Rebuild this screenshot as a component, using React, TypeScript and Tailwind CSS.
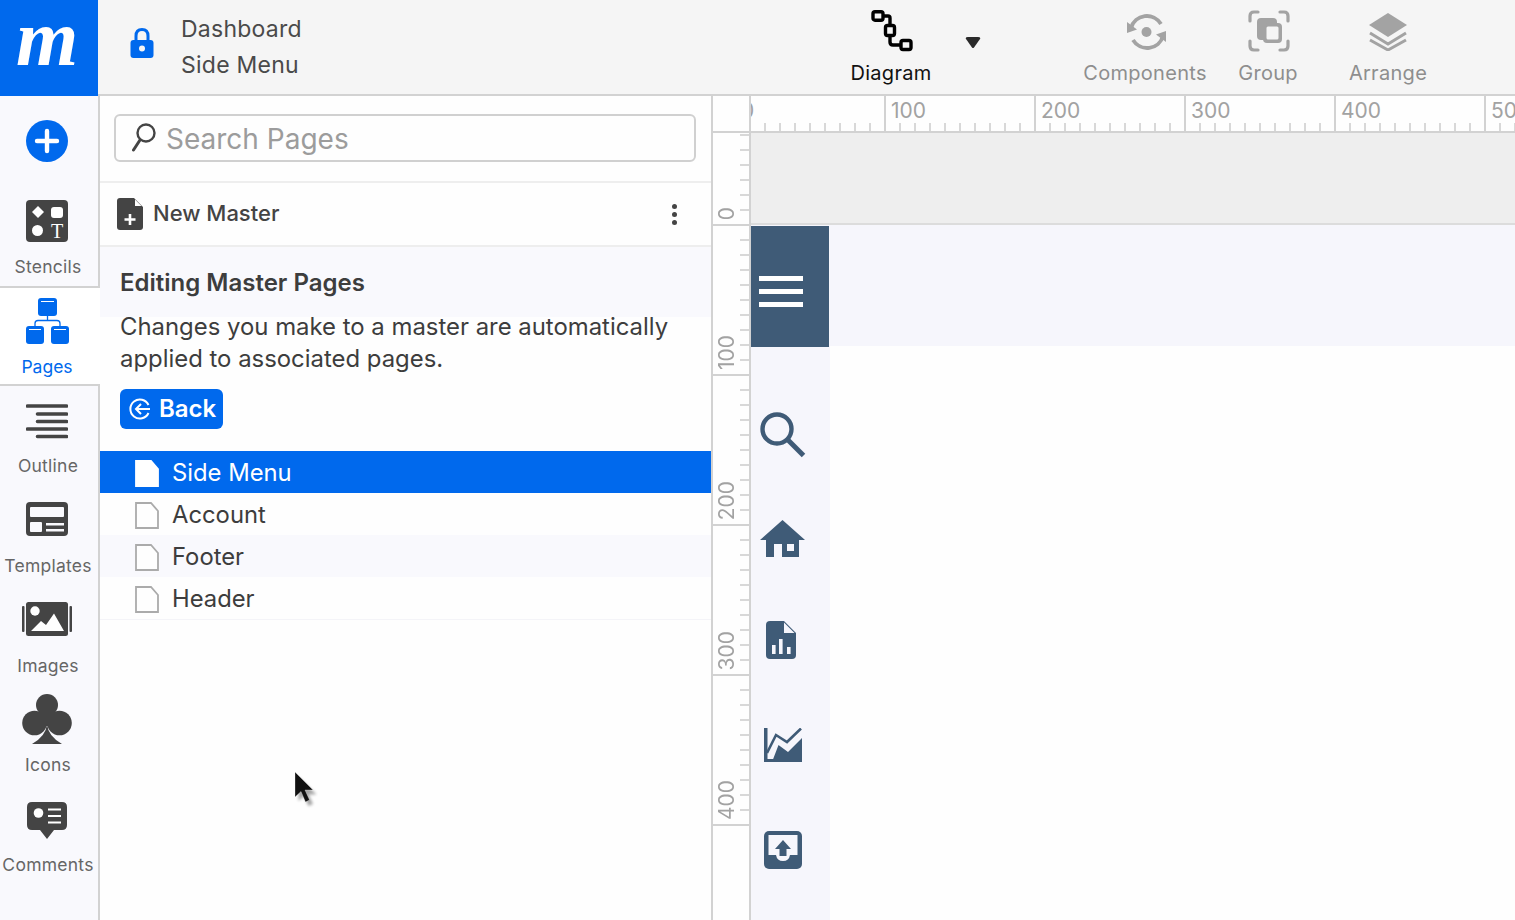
import React from "react";

const BLUE = "#0069ed";
const DARK = "#444444";
const NAVY = "#3f5b77";

function Ic({ w, h, children, className = "" }: { w: number; h: number; children: React.ReactNode; className?: string }) {
  return (
    <svg width={w} height={h} viewBox={`0 0 ${w} ${h}`} className={`block shrink-0 ${className}`}>
      {children}
    </svg>
  );
}

const Stencils = () => (
  <Ic w={42} h={42}>
    <rect width={42} height={42} rx={4} fill={DARK} />
    <path d="M12 6 L18 12 L12 18 L6 12 Z" fill="#fff" />
    <rect x={25} y={7} width={12} height={11} rx={3} fill="#fff" />
    <circle cx={11.5} cy={30.5} r={5.5} fill="#fff" />
    <text x={31} y={38} textAnchor="middle" fontFamily="Liberation Serif, serif" fontSize={20} fill="#fff">T</text>
  </Ic>
);
const Pages = () => (
  <Ic w={44} h={46}>
    <rect x={12} y={0} width={19} height={18} rx={3} fill={BLUE} />
    <rect x={0} y={28} width={18} height={18} rx={3} fill={BLUE} />
    <rect x={25} y={28} width={18} height={18} rx={3} fill={BLUE} />
    <path d="M15 3.5H28M3 31.5H15M28 31.5H40" stroke="#fff" strokeWidth={1.2} />
    <path d="M21.5 18V22M9 28V25.5Q9 22.5 12 22.5H31Q34 22.5 34 25.5V28" stroke={BLUE} strokeWidth={1.3} fill="none" />
  </Ic>
);
const Outline = () => (
  <Ic w={42} h={36}>
    <path d="M1.5 3H40.5M11.5 11H40.5M11.5 18.5H40.5M1.5 26H40.5M11.5 33.5H40.5" stroke={DARK} strokeWidth={3.6} strokeLinecap="round" />
  </Ic>
);
const Templates = () => (
  <Ic w={42} h={34}>
    <rect width={42} height={34} rx={4} fill={DARK} />
    <rect x={4} y={5} width={34} height={10} rx={1} fill="#f9f9fd" />
    <rect x={4} y={20} width={12} height={10} rx={1} fill="#f9f9fd" />
    <rect x={20} y={21} width={18} height={2.5} fill="#f9f9fd" />
    <rect x={20} y={27} width={18} height={2.5} fill="#f9f9fd" />
  </Ic>
);
const Images = () => (
  <Ic w={50} h={34}>
    <rect x={0} y={4} width={2.5} height={26} rx={1} fill={DARK} />
    <rect x={47.5} y={4} width={2.5} height={26} rx={1} fill={DARK} />
    <rect x={4} y={0} width={42} height={34} rx={2.5} fill={DARK} />
    <circle cx={13} cy={9} r={4.7} fill="#fff" />
    <path d="M9 29 L19 19 L24 23 L32 11.5 L42 29 Z" fill="#fff" />
  </Ic>
);
const Club = () => (
  <Ic w={50} h={50}>
    <circle cx={25} cy={11} r={11} fill={DARK} />
    <circle cx={12.5} cy={29} r={12.3} fill={DARK} />
    <circle cx={37.5} cy={29} r={12.3} fill={DARK} />
    <rect x={18} y={16} width={14} height={16} fill={DARK} />
    <path d="M25 30 Q24 42 10 50 H40 Q26 42 25 30 Z" fill={DARK} />
  </Ic>
);
const Comments = () => (
  <Ic w={40} h={38}>
    <path d="M5 0H35Q40 0 40 5V23Q40 28 35 28H27L20 37L13 28H5Q0 28 0 23V5Q0 0 5 0Z" fill={DARK} />
    <circle cx={11.5} cy={11} r={4.8} fill="#fff" />
    <path d="M21 7.5H34M21 14H34M21 20.5H34" stroke="#fff" strokeWidth={2} />
  </Ic>
);
const Plus = () => (
  <Ic w={42} h={42}>
    <circle cx={21} cy={21} r={21} fill={BLUE} />
    <path d="M21 11V31M11 21H31" stroke="#fff" strokeWidth={4.4} strokeLinecap="round" />
  </Ic>
);
const Lock = () => (
  <Ic w={24} h={32}>
    <path d="M6 15V9Q6 2.5 12 2.5T18 9V15" fill="none" stroke={BLUE} strokeWidth={3} />
    <rect x={0.5} y={13} width={23} height={18} rx={3} fill={BLUE} />
    <circle cx={12} cy={21.5} r={3} fill="#f5f5f5" />
  </Ic>
);
const DiagramIcon = () => (
  <Ic w={42} h={42}>
    <g fill="none" stroke="#000" strokeWidth={3.4}>
      <rect x={2} y={1.7} width={10} height={8.5} rx={2} />
      <rect x={14.5} y={15.5} width={9} height={10} rx={2} />
      <rect x={30} y={30.5} width={10} height={9} rx={2} />
      <path d="M12 6H17Q19 6 19 8V15.5M19 25.5V32Q19 35 22 35H30" />
    </g>
  </Ic>
);
const ComponentsIcon = () => (
  <Ic w={40} h={38}>
    <g fill="none" stroke="#a3a3a3" strokeWidth={3.8}>
      <path d="M4 15A16.5 16.5 0 0 1 34 11" />
      <path d="M36 23A16.5 16.5 0 0 1 6 27" />
    </g>
    <path d="M0 9L10 16.5L0 20Z" fill="#a3a3a3" />
    <path d="M39 29L29 21.5L39 18Z" fill="#a3a3a3" />
    <circle cx={19.5} cy={19} r={5} fill="#a3a3a3" />
  </Ic>
);
const GroupIcon = () => (
  <Ic w={42} h={42}>
    <g fill="none" stroke="#a3a3a3" strokeWidth={3.2} strokeLinecap="round">
      <path d="M10 2H6Q2 2 2 6V11M32 2H36Q40 2 40 6V11M10 40H6Q2 40 2 36V31M32 40H36Q40 40 40 36V31" />
    </g>
    <rect x={9} y={8} width={20} height={22} rx={4} fill="#a3a3a3" />
    <rect x={15} y={13} width={19} height={20} rx={4} fill="#a3a3a3" />
    <rect x={18.5} y={16.5} width={12} height={13} rx={1.5} fill="#f5f5f5" />
  </Ic>
);
const ArrangeIcon = () => (
  <Ic w={40} h={38}>
    <path d="M20 0L39 12L20 24L1 12Z" fill="#a3a3a3" />
    <path d="M2 20L20 31L38 20M2 27L20 37L38 27" fill="none" stroke="#a3a3a3" strokeWidth={3} />
  </Ic>
);
const SearchSmall = () => (
  <Ic w={24} h={30}>
    <circle cx={14} cy={10} r={8.5} fill="none" stroke={DARK} strokeWidth={2.4} />
    <path d="M8 17L1.5 27" stroke={DARK} strokeWidth={3} strokeLinecap="round" />
  </Ic>
);
const NewMasterIcon = () => (
  <Ic w={26} h={32}>
    <path d="M3 0H17L26 9V29Q26 32 23 32H3Q0 32 0 29V3Q0 0 3 0Z" fill={DARK} />
    <path d="M18 1.5L24.5 8H18Z" fill="#fff" />
    <path d="M13 16V27M7.5 21.5H18.5" stroke="#fff" strokeWidth={2.6} />
  </Ic>
);
const Doc = ({ on }: { on?: boolean }) => (
  <Ic w={24} h={27} className="mt-[2px]">
    <path d="M1 1H16L23 9V26H1Z" fill={on ? "#fff" : "#fefefe"} stroke={on ? "#fff" : "#ababab"} strokeWidth={1.8} />
  </Ic>
);
const BackIcon = () => (
  <Ic w={22} h={22}>
    <path d="M19.5 7A9.5 9.5 0 1 0 19.5 15" fill="none" stroke="#fff" strokeWidth={2} />
    <path d="M21 11H7M12 6L7 11L12 16" fill="none" stroke="#fff" strokeWidth={2} />
  </Ic>
);
const SearchNav = () => (
  <Ic w={46} h={46}>
    <circle cx={17} cy={17} r={14.5} fill="none" stroke={NAVY} strokeWidth={4.4} />
    <path d="M27.5 27.5L43.5 43.5" stroke={NAVY} strokeWidth={5} />
  </Ic>
);
const HomeNav = () => (
  <Ic w={45} h={37}>
    <path d="M22.5 0L45 20H39V37H6V20H0Z" fill={NAVY} />
    <rect x={14} y={24} width={8} height={13} fill="#f6f6fc" />
    <rect x={27} y={24} width={7} height={7} fill="#f6f6fc" />
  </Ic>
);
const ReportNav = () => (
  <Ic w={30} h={38}>
    <path d="M4 0H18L30 12V34Q30 38 26 38H4Q0 38 0 34V4Q0 0 4 0Z" fill={NAVY} />
    <path d="M18 1.5L28.5 12H18Z" fill="#f6f6fc" />
    <rect x={6} y={24} width={3.6} height={9} fill="#f6f6fc" />
    <rect x={13} y={18} width={3.6} height={15} fill="#f6f6fc" />
    <rect x={21} y={26} width={3.6} height={7} fill="#f6f6fc" />
  </Ic>
);
const ChartNav = () => (
  <Ic w={38} h={34}>
    <rect x={0} y={0} width={3.5} height={34} fill={NAVY} />
    <path d="M3 25L12 7L23 14L37 0.5" fill="none" stroke={NAVY} strokeWidth={2.6} />
    <path d="M8 34L14.5 17L24 24L38 10V34Z" fill={NAVY} />
    <rect x={0} y={31} width={10} height={3} fill={NAVY} />
  </Ic>
);
const UploadNav = () => (
  <Ic w={38} h={38}>
    <rect width={38} height={38} rx={5} fill={NAVY} />
    <path d="M4.5 4H33.5V24H26Q25 30 19 30T12 24H4.5Z" fill="#f6f6fc" />
    <path d="M19 9L27 18H22.5V25H15.5V18H11Z" fill={NAVY} />
  </Ic>
);
const Cursor = () => (
  <svg width={24} height={40} viewBox="0 0 24 40" className="block">
    <path d="M3 4V28L8.5 23L13 33L17.5 31L13 21.5H21Z" fill="#000" opacity={0.35} style={{ filter: "blur(1.5px)" }} transform="translate(1.5 2)" />
    <path d="M1 1V26L7 20.5L11.5 31L15.5 29L11 19H19Z" fill="#111" stroke="#fff" strokeWidth={0.3} />
  </svg>
);

function NavLabel({ children, className = "" }: { children: React.ReactNode; className?: string }) {
  return <div className={`text-[17.5px] tracking-[0.25px] ml-[2px] leading-[22px] text-[#666666] whitespace-nowrap ${className}`}>{children}</div>;
}

function HSeg({ label }: { label: string }) {
  return (
    <div className="w-[150px] h-full shrink-0 border-r-2 border-[#d2d2d2] flex flex-col justify-between box-border">
      <div className="h-[27px] pt-[3px] flex justify-end">
        <span className="w-[143px] text-[21px] leading-[24px] text-[#a2a2a2]">{label}</span>
      </div>
      <div className="flex h-[8px] justify-end">
        {[0, 1, 2, 3, 4, 5, 6, 7, 8].map((i) => (
          <div key={i} className="w-[15px] border-r-2 border-[#d8d8d8]" />
        ))}
        <div className="w-[13px]" />
      </div>
    </div>
  );
}

function VSeg({ label }: { label: string }) {
  return (
    <div className="h-[150px] shrink-0 border-b-2 border-[#d2d2d2] flex box-border">
      <div className="w-[27px] flex flex-col justify-end items-center pb-[4px] pl-[1px]">
        <span className="[writing-mode:vertical-rl] rotate-180 text-[21px] leading-[24px] text-[#a2a2a2]">{label}</span>
      </div>
      <div className="w-[9px] flex flex-col justify-end">
        {[0, 1, 2, 3, 4, 5, 6, 7, 8].map((i) => (
          <div key={i} className="h-[15px] border-t-2 border-[#d8d8d8]" />
        ))}
      </div>
    </div>
  );
}

function Tool({ icon, label, w, ml, dark, gap }: { icon: React.ReactNode; label: string; w: string; ml: string; dark?: boolean; gap: string }) {
  return (
    <div className={`flex flex-col items-center shrink-0 ${w} ${ml}`}>
      <div className={`h-[52px] flex flex-col justify-center ${gap}`}>{icon}</div>
      <div className={`mt-[8px] text-[20px] tracking-[0.3px] leading-[26px] whitespace-nowrap ${dark ? "text-[#111111]" : "text-[#8e8e8e]"}`}>{label}</div>
    </div>
  );
}

function Row({ label, on, alt }: { label: string; on?: boolean; alt?: boolean }) {
  return (
    <div className={`h-[42px] flex items-center pl-[35px] gap-[13px] ${on ? "bg-[#0069ed] text-white" : alt ? "bg-[#f9f9fd] text-[#3d3d3d]" : "bg-[#fefefe] text-[#3d3d3d]"}`}>
      <Doc on={on} />
      <span className="text-[23.8px] leading-[30px] pt-[2px]">{label}</span>
    </div>
  );
}

export default function App() {
  return (
    <div className="relative w-[1515px] h-[920px] overflow-hidden bg-[#fefefe] flex flex-col font-['Inter',sans-serif]">
      {/* top bar */}
      <div className="h-[96px] shrink-0 flex bg-[#f5f5f5] border-b-2 border-[#d2d2d2] box-border">
        <div className="w-[98px] h-[96px] shrink-0 bg-[#0069ed] flex items-center justify-center">
          <span className="font-['Liberation_Serif',serif] italic font-bold text-white text-[80px] leading-[76px] -mt-[20px] mr-[4px]">m</span>
        </div>
        <div className="ml-[32px] w-[24px] pt-[27px]"><Lock /></div>
        <div className="ml-[27px] w-[660px] shrink-0 pt-[11px] text-[23px] tracking-[0.25px] leading-[36px] text-[#4a4a4a]">
          <div>Dashboard</div>
          <div>Side Menu</div>
        </div>
        <div className="absolute left-[841px] top-0 flex">
          <Tool icon={<DiagramIcon />} label="Diagram" w="w-[100px]" ml="ml-0" dark gap="pt-[10px] ml-[2px]" />
        </div>
        <div className="absolute left-[965px] top-[37px]">
          <Ic w={16} h={11}><path d="M1 2Q0 0 3 0H13Q16 0 15 2L9 10.5Q8 11.5 7 10.5Z" fill="#2a2a2a" /></Ic>
        </div>
        <div className="absolute left-[1084px] top-0 flex">
          <Tool icon={<ComponentsIcon />} label="Components" w="w-[122px]" ml="ml-0" gap="pt-[12px] ml-[4px]" />
          <Tool icon={<GroupIcon />} label="Group" w="w-[80px]" ml="ml-[22px]" gap="pt-[10px] ml-[2px]" />
          <Tool icon={<ArrangeIcon />} label="Arrange" w="w-[100px]" ml="ml-[30px]" gap="pt-[12px]" />
        </div>
      </div>

      <div className="flex-1 flex min-h-0">
        {/* left nav */}
        <div className="w-[100px] shrink-0 bg-[#f9f9fd] border-r-2 border-[#d2d2d2] box-border flex flex-col relative">
          <div className="h-[192px] flex flex-col items-center pt-[24px] pr-[4px]">
            <Plus />
            <div className="mt-[38px]"><Stencils /></div>
            <NavLabel className="mt-[14px]">Stencils</NavLabel>
          </div>
          <div className="w-[100px] h-[100px] shrink-0 bg-white border-y-2 border-[#d2d2d2] flex flex-col items-center pt-[10px] pr-[4px] box-border -mt-[2px]">
            <Pages />
            <div className="text-[17.5px] leading-[22px] mt-[12px] mr-[2px] text-[#0069ed]">Pages</div>
          </div>
          <div className="flex flex-col items-center pr-[4px]">
            <div className="mt-[17px]"><Outline /></div>
            <NavLabel className="mt-[16px]">Outline</NavLabel>
            <div className="mt-[25px]"><Templates /></div>
            <NavLabel className="mt-[19px]">Templates</NavLabel>
            <div className="mt-[25px]"><Images /></div>
            <NavLabel className="mt-[19px]">Images</NavLabel>
            <div className="mt-[17px]"><Club /></div>
            <NavLabel className="mt-[10px]">Icons</NavLabel>
            <div className="mt-[26px]"><Comments /></div>
            <NavLabel className="mt-[14px]">Comments</NavLabel>
          </div>
        </div>

        {/* panel */}
        <div className="w-[611px] shrink-0 flex flex-col">
          <div className="h-[87px] border-b-2 border-[#eeeeee] box-border pt-[18px] pl-[14px] pr-[15px]">
            <div className="h-[48px] border-2 border-[#d0d0d0] rounded-[6px] flex items-center pl-[16px] gap-[10px] bg-[#fefefe]">
              <SearchSmall />
              <span className="text-[28px] leading-[34px] pt-[2px] text-[#9c9c9c]">Search Pages</span>
            </div>
          </div>
          <div className="h-[64px] border-b-2 border-[#eeeeee] box-border flex items-center pl-[17px] pr-[34px] gap-[10px]">
            <NewMasterIcon />
            <span className="flex-1 text-[22px] leading-[28px] -mt-[2px] font-medium text-[#444444]">New Master</span>
            <div className="flex flex-col gap-[3px]">
              <div className="w-[5px] h-[5px] rounded-full bg-[#444444]" />
              <div className="w-[5px] h-[5px] rounded-full bg-[#444444]" />
              <div className="w-[5px] h-[5px] rounded-full bg-[#444444]" />
            </div>
          </div>
          <div className="h-[70px] bg-[#f9f9fd] pl-[20px] pt-[20px]">
            <div className="text-[24px] leading-[32px] font-semibold text-[#3d3d3d]">Editing Master Pages</div>
          </div>
          <div className="pl-[20px] pr-[30px] text-[23.9px] leading-[32px] text-[#3d3d3d] -mt-[6px]">
            <div>Changes you make to a master are automatically applied to associated pages.</div>
          </div>
          <div className="pl-[20px] mt-[14px]">
            <div className="inline-flex items-center h-[40px] w-[103px] rounded-[6px] bg-[#0069ed] pl-[9px] gap-[8px] text-white text-[24px] font-semibold">
              <BackIcon />
              <span>Back</span>
            </div>
          </div>
          <div className="mt-[22px] border-b border-[#f4f4f8]">
            <Row label="Side Menu" on />
            <Row label="Account" />
            <Row label="Footer" alt />
            <Row label="Header" />
          </div>
        </div>

        {/* vertical ruler */}
        <div className="w-[40px] shrink-0 border-x-2 border-[#d2d2d2] box-border flex flex-col overflow-hidden">
          <div className="h-[37px] shrink-0 border-b-2 border-[#d2d2d2] box-border" />
          <div className="flex-1 min-h-0 overflow-hidden flex flex-col bg-[#fefefe]">
            <div className="-mt-[57px]" />
            <VSeg label="0" />
            <VSeg label="100" />
            <VSeg label="200" />
            <VSeg label="300" />
            <VSeg label="400" />
          </div>
        </div>

        {/* canvas */}
        <div className="flex-1 min-w-0 flex flex-col">
          <div className="h-[37px] shrink-0 border-b-2 border-[#d2d2d2] box-border overflow-hidden flex">
            <div className="-ml-[15px]" />
            <HSeg label="0" />
            <HSeg label="100" />
            <HSeg label="200" />
            <HSeg label="300" />
            <HSeg label="400" />
            <HSeg label="500" />
          </div>
          <div className="h-[92px] shrink-0 bg-[#eeeeee] border-b-2 border-[#dcdcdc] box-border" />
          <div className="h-[121px] shrink-0 bg-[#f6f6fc] flex">
            <div className="relative w-[78px] h-[121px] mt-[1px] bg-[#3f5b77] flex flex-col items-start justify-center gap-[8px] pl-[8px] pt-[9px]">
              <div className="w-[44px] h-[5px] bg-white" />
              <div className="w-[44px] h-[5px] bg-white" />
              <div className="w-[44px] h-[5px] bg-white" />
            </div>
          </div>
          <div className="flex-1 min-h-0 flex">
            <div className="w-[79px] bg-[#f6f6fc] flex flex-col items-start overflow-hidden">
              <div className="ml-[9px] mt-[66px]"><SearchNav /></div>
              <div className="ml-[9px] mt-[62px]"><HomeNav /></div>
              <div className="ml-[15px] mt-[64px]"><ReportNav /></div>
              <div className="ml-[13px] mt-[69px]"><ChartNav /></div>
              <div className="ml-[13px] mt-[69px]"><UploadNav /></div>
            </div>
          </div>
        </div>
      </div>

      {/* mouse pointer */}
      <div className="absolute left-[294px] top-[771px]"><Cursor /></div>
    </div>
  );
}
